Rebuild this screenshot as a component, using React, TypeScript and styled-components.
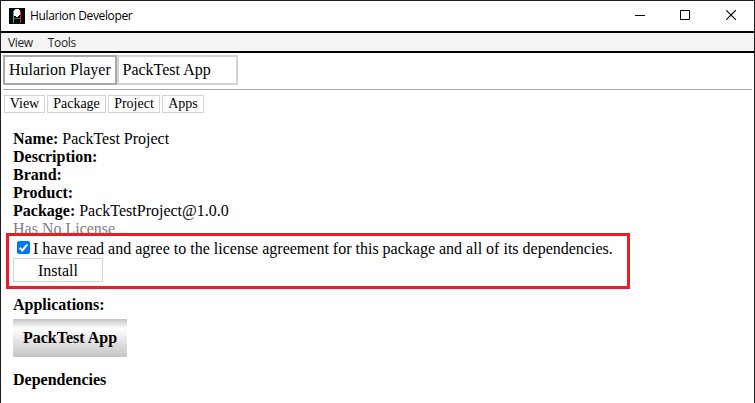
import React from "react";
import styled, { createGlobalStyle } from "styled-components";

const GlobalStyle = createGlobalStyle`
  * { box-sizing: border-box; }
  body { margin: 0; background: #fff; overflow: hidden; }
`;

const Window = styled.div`
  position: relative;
  width: 755px;
  height: 403px;
  border: 1px solid #1f1f22;
  border-bottom: 0;
  background: #fff;
  color: #000;
  font: 16px/18px "Liberation Serif", "Times New Roman", serif;
  white-space: nowrap;
  overflow: hidden;
`;

const TitleBar = styled.header`
  display: flex;
  align-items: center;
  height: 30px;
  padding-left: 8px;
`;

const Title = styled.span`
  flex: 1;
  margin-left: 5px;
  font: 12px/16px "Open Sans", "Segoe UI", sans-serif;
  letter-spacing: -0.37px;
`;

const Controls = styled.div`
  display: flex;
  margin-top: -2px;
`;

const ControlButton = styled.div`
  display: flex;
  align-items: center;
  justify-content: center;
  width: 45px;
  height: 28px;

  &:last-child { width: 47px; }
`;

const MenuBar = styled.nav`
  display: flex;
  gap: 15px;
  height: 22px;
  padding-left: 7px;
  border: solid #000;
  border-width: 2px 0;
  background: #f4f4f4;
  color: #222;
  font: 12px/19px "Open Sans", "Segoe UI", sans-serif;
  letter-spacing: -0.35px;
`;

const Tabs = styled.div`
  display: flex;
  margin: 2px 2px 0;
  height: 35px;
  border-bottom: 1px solid #a9a9a9;
`;

const Tab = styled.div<{ $active?: boolean; $width: number }>`
  width: ${(p) => p.$width}px;
  height: 30px;
  padding-left: ${(p) => (p.$active ? 4 : 3.5)}px;
  border: 2px solid ${(p) => (p.$active ? "#a9a9a9" : "#d3d3d3")};
  line-height: 26px;
`;

const Toolbar = styled.div`
  display: flex;
  gap: 2px;
  margin: 5px 3px 0;
`;

const ToolButton = styled.div<{ $width: number }>`
  width: ${(p) => p.$width}px;
  height: 18px;
  border: 1px solid #d3d3d3;
  font-size: 14px;
  line-height: 16px;
  text-align: center;
`;

const Content = styled.main`
  padding: 17px 12px 0;
`;

const License = styled.div`
  color: #808080;
`;

const Agreement = styled.label`
  display: flex;
  align-items: center;
  gap: 3px;
  height: 19px;
  margin-top: 1px;
  padding-left: 4px;
`;

const CheckMark = styled.svg`
  display: block;
  margin-top: -3px;
`;

const InstallButton = styled.div`
  width: 90px;
  height: 24px;
  border: 1px solid #d3d3d3;
  line-height: 23px;
  text-align: center;
`;

const Heading = styled.div<{ $top: number }>`
  margin-top: ${(p) => p.$top}px;
  font-weight: bold;
`;

const AppButton = styled.div`
  width: 114px;
  height: 38px;
  margin-top: 5px;
  background: linear-gradient(#c4c4c4, #fff 25%, #c4c4c4);
  font-weight: bold;
  line-height: 37px;
  text-align: center;
`;

const Highlight = styled.div`
  position: absolute;
  left: 5px;
  top: 232px;
  width: 624px;
  height: 56px;
  border: 3px solid #ed1c24;
`;

const AppIcon = () => (
  <svg width="16" height="16" viewBox="0 0 16 16" shapeRendering="crispEdges">
    <rect width="16" height="16" fill="#000" />
    <path d="M4 3h1v12H4z" fill="#3aa6c4" />
    <path d="M11 3h1v12h-1z" fill="#ed1c24" />
    <path d="M5 10h6v1H5z" fill="#168c46" />
    <path d="M6 1h4v1h1v5h-1v1H9v1H7V8H5V2h1z" fill="#fff" />
  </svg>
);

const fields = [
  ["Name:", "PackTest Project"],
  ["Description:", ""],
  ["Brand:", ""],
  ["Product:", ""],
  ["Package:", "PackTestProject@1.0.0"],
];

export default function App() {
  return (
    <>
      <GlobalStyle />
      <Window>
        <TitleBar>
          <AppIcon />
          <Title>Hularion Developer</Title>
          <Controls>
            <ControlButton>
              <svg width="10" height="10" shapeRendering="crispEdges">
                <path d="M0 5h10v1H0z" />
              </svg>
            </ControlButton>
            <ControlButton>
              <svg width="10" height="10" fill="none" stroke="#000">
                <path d="M.5.5h9v9h-9z" />
              </svg>
            </ControlButton>
            <ControlButton>
              <svg width="10" height="10" fill="none" stroke="#000" strokeWidth="1.1">
                <path d="M0 0l10 10M10 0L0 10" />
              </svg>
            </ControlButton>
          </Controls>
        </TitleBar>
        <MenuBar>
          <span>View</span>
          <span>Tools</span>
        </MenuBar>
        <Tabs>
          <Tab $active $width={114}>Hularion Player</Tab>
          <Tab $width={121}>PackTest App</Tab>
        </Tabs>
        <Toolbar>
          <ToolButton $width={41}>View</ToolButton>
          <ToolButton $width={59}>Package</ToolButton>
          <ToolButton $width={52}>Project</ToolButton>
          <ToolButton $width={42}>Apps</ToolButton>
        </Toolbar>
        <Content>
          {fields.map(([label, value]) => (
            <div key={label}>
              <b>{label}</b> {value}
            </div>
          ))}
          <License>Has No License</License>
          <Agreement>
            <CheckMark width="13" height="13" viewBox="0 0 13 13">
              <rect width="13" height="13" rx="2" fill="#0075ff" />
              <path d="M2.6 6.8l2.7 2.7 5-6.2" fill="none" stroke="#fff" strokeWidth="2" />
            </CheckMark>
            <span>I have read and agree to the license agreement for this package and all of its dependencies.</span>
          </Agreement>
          <InstallButton>Install</InstallButton>
          <Heading $top={14}>Applications:</Heading>
          <AppButton>PackTest App</AppButton>
          <Heading $top={14}>Dependencies</Heading>
        </Content>
        <Highlight />
      </Window>
    </>
  );
}
